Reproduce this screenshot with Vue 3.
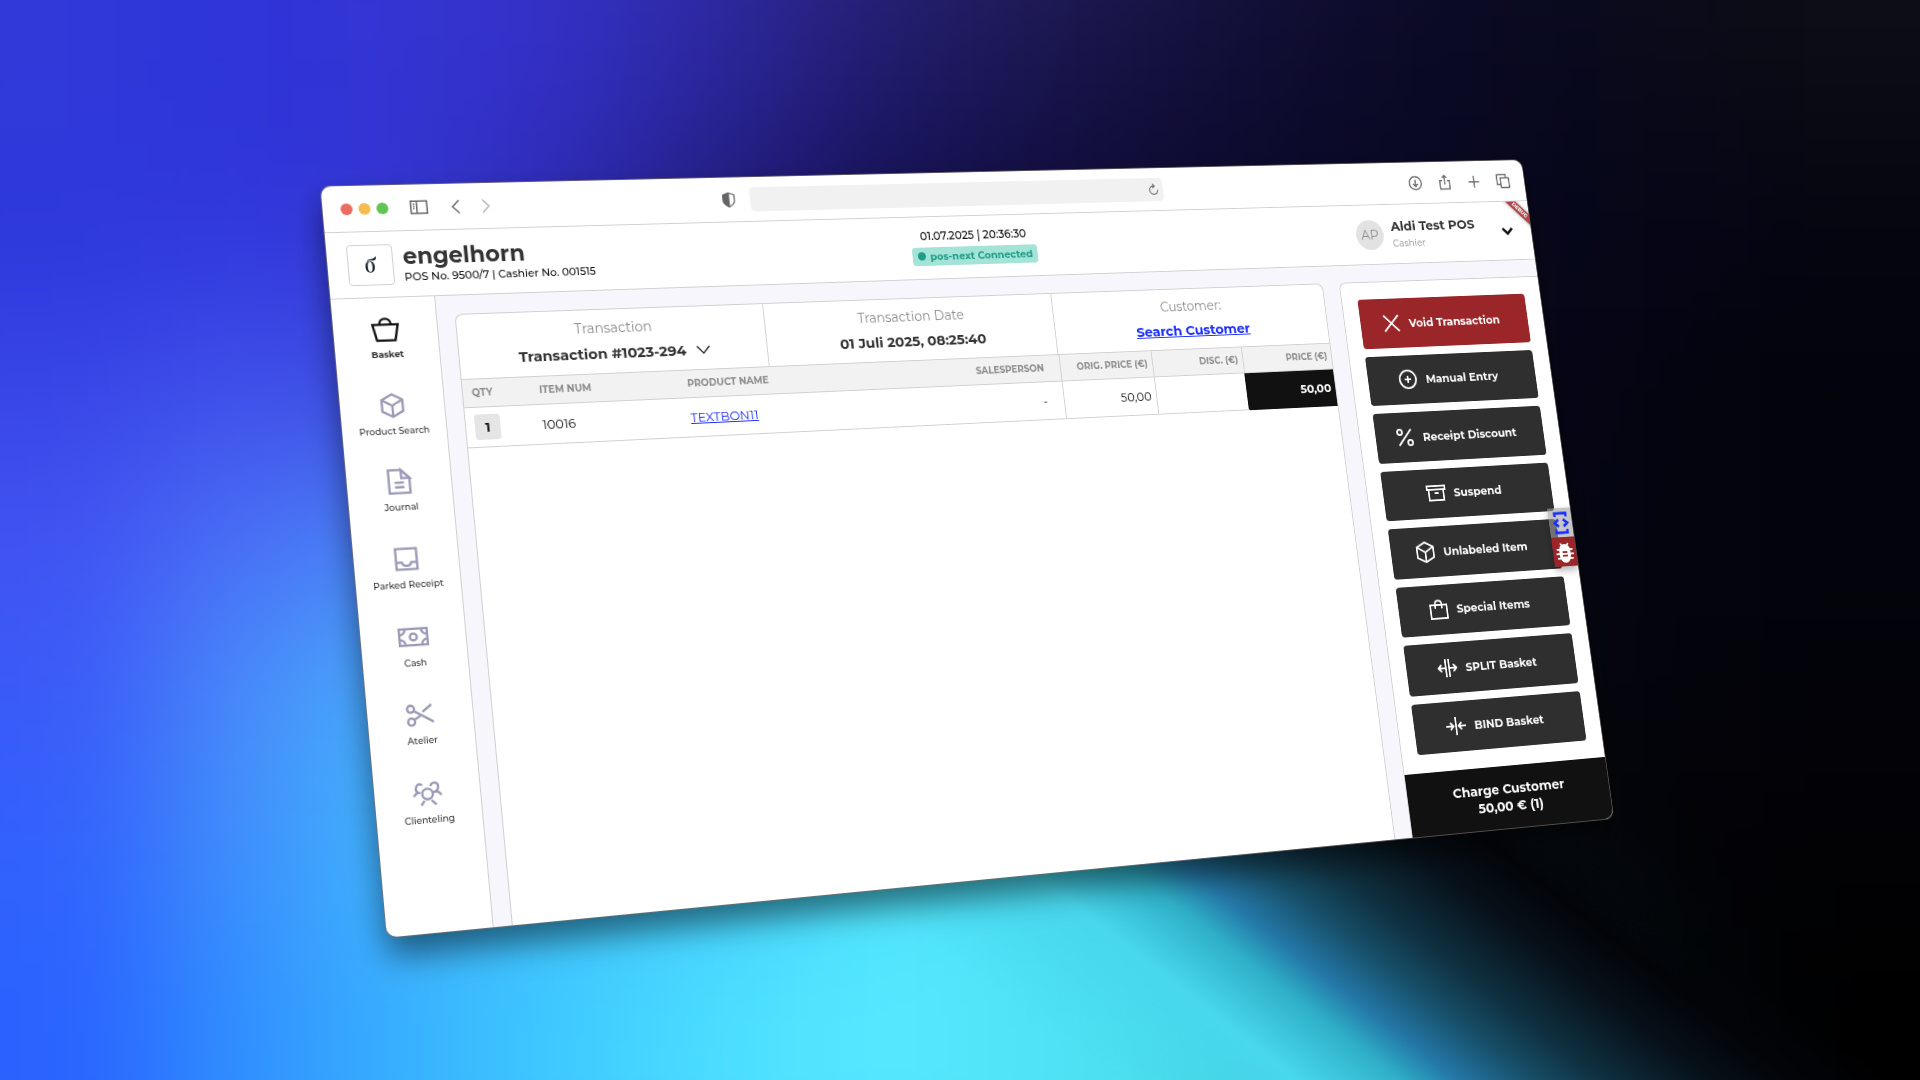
<script setup>
const backdrop = [
  ['#3139d9', '#3139d9', '#2f36da', '#3636d4', '#3532c6', '#302ba2', '#2a2478', '#241f5a', '#191545', '#100e30', '#0c0b22', '#0e0e1a', '#101018', '#101018'],
  ['#3139d9', '#3139d9', '#2d33d8', '#3434d2', '#322fc4', '#2a269c', '#201b6c', '#19154e', '#110e38', '#0b0a28', '#080820', '#090918', '#0b0b14', '#0b0b14'],
  ['#2d38dc', '#2d38dc', '#3138dd', '#3335d2', '#2d2ab0', '#201b78', '#140f50', '#0e0b3a', '#0b092c', '#090824', '#07071c', '#050516', '#050510', '#050510'],
  ['#3845e6', '#3845e6', '#4050ea', '#3c4ae0', '#2a3ac0', '#1a2080', '#101050', '#0a0a3a', '#08082a', '#070720', '#060618', '#04040f', '#03030c', '#03030c'],
  ['#4154f2', '#4154f2', '#4a70f6', '#4a84f6', '#3a7ae0', '#2a60b0', '#1c4080', '#102858', '#0a1838', '#070c24', '#050616', '#04040e', '#03030c', '#03030c'],
  ['#3a5af8', '#3a5af8', '#4a8cfa', '#46b0fa', '#40b8f8', '#3ab0f0', '#3a98d0', '#3080a0', '#206070', '#103040', '#05080f', '#03030a', '#020208', '#020208'],
  ['#3262fc', '#3262fc', '#4090fc', '#3fb6fc', '#40c0fb', '#42ccfb', '#4ae0fc', '#4ae0f6', '#3fc8da', '#123c54', '#04060c', '#020206', '#020205', '#020205'],
  ['#2a62ff', '#2a62ff', '#3090ff', '#38b0ff', '#3ecaff', '#4cdeff', '#58eaff', '#50e2f6', '#46dcea', '#249cb0', '#0a3238', '#010406', '#000000', '#000000'],
  ['#2a62ff', '#2a62ff', '#3090ff', '#38b0ff', '#3ecaff', '#4cdeff', '#54e6ff', '#50e2f6', '#4ae0ec', '#30b4c2', '#0e4a50', '#020608', '#000000', '#000000'],
]

const cube = ['M12 2l9 5v10l-9 5-9-5V7z', 'M3 7l9 5 9-5', 'M12 12v10']

const navItems = [
  { label: 'Basket', active: true, paths: ['M1 8h22l-3 14H4z', 'M7 8c0-7 10-7 10 0'] },
  { label: 'Product Search', paths: cube },
  { label: 'Journal', paths: ['M3 2h11l7 7v13H3z', 'M14 2v7h7z', 'M8 13h8M8 17h8'] },
  { label: 'Parked Receipt', paths: ['M3 3h18v18H3z', 'M3 15h5c1 4 7 4 8 0h5'] },
  { label: 'Cash', paths: ['M0 5h24v14H0z', 'M12 9a3 3 0 1 0 0 6a3 3 0 1 0 0-6', 'M5 5a5 5 0 0 1-5 5M19 5a5 5 0 0 0 5 5M5 19a5 5 0 0 0-5-5M19 19a5 5 0 0 1 5-5'] },
  { label: 'Atelier', paths: ['M4 4a3 3 0 1 0 0 6a3 3 0 1 0 0-6', 'M4 15a3 3 0 1 0 0 6a3 3 0 1 0 0-6', 'M7 9l16 10', 'M7 16l5-3M14 10l8-6'] },
  { label: 'Clienteling', paths: ['M12 8a4 4 0 1 0 0 9a4 4 0 1 0 0-9', 'M9 18l-3 4M15 18l4 4', 'M0 14l3-3M8 5c-3-4-8 2-4 6h2', 'M15 6c1-5 9-3 6 3l-2 2M17 11h4l3 3'] },
]

const actions = [
  { label: 'Void Transaction', danger: true, paths: ['M3 3l18 18M21 3L3 21'] },
  { label: 'Manual Entry', paths: ['M12 2a10 10 0 1 0 0 20a10 10 0 1 0 0-20', 'M12 8v8M8 12h8'] },
  { label: 'Receipt Discount', paths: ['M20 3L4 21', 'M6 3a3 3 0 1 0 0 6a3 3 0 1 0 0-6', 'M18 15a3 3 0 1 0 0 6a3 3 0 1 0 0-6'] },
  { label: 'Suspend', paths: ['M1 4h22v4H1z', 'M3 8v12h18V8', 'M10 12h5'] },
  { label: 'Unlabeled Item', paths: ['M12 1l10 5v12l-10 5-10-5V6z', 'M2 6l10 6 10-6', 'M12 12v11'] },
  { label: 'Special Items', paths: ['M2 7h20v15H2z', 'M8 11V6c0-5 8-5 8 0v5'] },
  { label: 'SPLIT Basket', paths: ['M10 2v20M14 2v20', 'M10 12H2M5 8l-4 4 4 4', 'M14 12h8M19 8l4 4-4 4'] },
  { label: 'BIND Basket', paths: ['M12 2v20', 'M0 12h8M5 8l4 4-4 4', 'M24 12h-8M19 8l-4 4 4 4'] },
]

const toolbarIcons = [
  { name: 'Downloads', paths: ['M12 2a10 10 0 1 0 0 20a10 10 0 1 0 0-20', 'M12 7v10M8 13l4 4 4-4'] },
  { name: 'Share', paths: ['M8 9H4v13h16V9h-4', 'M12 15V1M8 5l4-4 4 4'] },
  { name: 'New tab', paths: ['M12 3v18M3 12h18'] },
  { name: 'Tab overview', paths: ['M8 7h14v15H8z', 'M8 17H2V2h15v5'] },
]
</script>

<template>
  <main class="stage">
    <div class="backdrop" aria-hidden="true">
      <template v-for="(row, r) in backdrop" :key="r">
        <span v-for="(tone, c) in row" :key="c" :style="{ background: tone }"></span>
      </template>
    </div>
    <div class="glow" aria-hidden="true"></div>

    <section class="window">
      <div class="chrome">
        <div class="chrome-left">
          <span class="dot red"></span>
          <span class="dot amber"></span>
          <span class="dot green"></span>
          <button class="tool side" aria-label="Sidebar">
            <svg viewBox="0 0 24 24"><path d="M1 3h22v17H1zM9 3v17M4 7h2M4 10h2M4 13h2" /></svg>
          </button>
          <button class="tool back" aria-label="Back">
            <svg viewBox="0 0 24 24"><path d="M16 3l-9 9 9 9" /></svg>
          </button>
          <button class="tool forward" aria-label="Forward">
            <svg viewBox="0 0 24 24"><path d="M8 3l9 9-9 9" /></svg>
          </button>
        </div>
        <div class="address">
          <svg class="shield" viewBox="0 0 24 24">
            <path d="M12 1l9 3v9c0 5-5 8-9 10c-4-2-9-5-9-10V4z" />
            <path class="half" d="M12 1v22c-4-2-9-5-9-10V4z" />
          </svg>
          <div class="field">
            <input type="text" aria-label="Address" />
            <button class="tool" aria-label="Reload">
              <svg viewBox="0 0 24 24"><path d="M20 13a8 8 0 1 1-8-8h2M10 1l4 4-4 4" /></svg>
            </button>
          </div>
        </div>
        <div class="chrome-right">
          <button v-for="icon in toolbarIcons" :key="icon.name" class="tool" :aria-label="icon.name">
            <svg viewBox="0 0 24 24"><path v-for="d in icon.paths" :key="d" :d="d" /></svg>
          </button>
        </div>
      </div>

      <header class="header">
        <div class="brand">
          <div class="logo">
            <svg viewBox="0 0 24 32">
              <path fill-rule="evenodd" d="M11 10c6 0 8 5 8 10c0 6-3 10-8 10c-5 0-8-4-8-10c0-5 2-10 8-10zM11 11c-3 0-4 5-4 9c0 4 1 9 4 9c3 0 4-5 4-9c0-4-1-9-4-9z" />
              <path d="M6 11c1-4 4-4 8-5c4 0 6-2 8-5c1 5-1 8-5 8c-4 0-8-1-11 2z" />
            </svg>
          </div>
          <div>
            <h1>engelhorn</h1>
            <p>POS No. 9500/7 | Cashier No. 001515</p>
          </div>
        </div>
        <div class="status">
          <time>01.07.2025 | 20:36:30</time>
          <span class="badge"><i></i>pos-next Connected</span>
        </div>
        <div class="user">
          <span class="avatar">AP</span>
          <div class="who">
            <strong>Aldi Test POS</strong>
            <small>Cashier</small>
          </div>
          <button class="more" aria-label="Account menu">
            <svg viewBox="0 0 16 16"><path d="M2 5l6 6 6-6" /></svg>
          </button>
        </div>
        <div class="corner"><span>DEBUG</span></div>
      </header>

      <div class="body">
        <nav class="nav">
          <a v-for="item in navItems" :key="item.label" href="#" :class="{ active: item.active }">
            <svg viewBox="-1 -1 26 26"><path v-for="d in item.paths" :key="d" :d="d" /></svg>
            {{ item.label }}
          </a>
        </nav>

        <div class="content">
          <div class="card">
            <div class="summary">
              <div>
                <span>Transaction</span>
                <button class="pick">
                  Transaction #1023-294
                  <svg viewBox="0 0 24 24"><path d="M2 6l10 11L22 6" /></svg>
                </button>
              </div>
              <div>
                <span>Transaction Date</span>
                <strong>01 Juli 2025, 08:25:40</strong>
              </div>
              <div>
                <span>Customer:</span>
                <a href="#">Search Customer</a>
              </div>
            </div>
            <table>
              <thead>
                <tr>
                  <th class="qty">QTY</th>
                  <th class="num">ITEM NUM</th>
                  <th>PRODUCT NAME</th>
                  <th class="seller">SALESPERSON</th>
                  <th class="money">ORIG. PRICE (€)</th>
                  <th class="money">DISC. (€)</th>
                  <th class="money">PRICE (€)</th>
                </tr>
              </thead>
              <tbody>
                <tr>
                  <td class="qty"><button>1</button></td>
                  <td>10016</td>
                  <td><a href="#">TEXTBON11</a></td>
                  <td class="seller">-</td>
                  <td class="money">50,00</td>
                  <td class="money"></td>
                  <td class="money total">50,00</td>
                </tr>
              </tbody>
            </table>
          </div>

          <aside class="panel">
            <div class="actions">
              <button v-for="action in actions" :key="action.label" :class="{ danger: action.danger }">
                <svg viewBox="0 0 24 24"><path v-for="d in action.paths" :key="d" :d="d" /></svg>
                {{ action.label }}
              </button>
            </div>
            <button class="charge">Charge Customer<br />50,00 € (1)</button>
          </aside>
        </div>
      </div>

      <div class="debug-tools">
        <button class="inspect" aria-label="Inspect">
          <svg viewBox="0 0 24 28">
            <path d="M5 7V3h14v4M5 21v4h14v-4" />
            <path d="M9 10l-5 4 5 4M15 10l5 4-5 4" />
          </svg>
        </button>
        <button class="bug" aria-label="Report bug">
          <svg viewBox="0 0 24 24">
            <path class="legs" d="M7 2l3 4M17 2l-3 4M2 9h20M1 14h22M2 19h20" />
            <path class="shell" d="M12 4c4 0 6 3 6 6v6c0 4-3 7-6 7s-6-3-6-7v-6c0-3 2-6 6-6z" />
            <path class="marks" d="M9 12h6M9 16h6" />
          </svg>
        </button>
      </div>
    </section>
  </main>
</template>

<style>
body {
  margin: 0;
  background: #05050f;
}
</style>

<style scoped>
* {
  box-sizing: border-box;
}

button,
input {
  margin: 0;
  padding: 0;
  border: 0;
  background: none;
  font: inherit;
  color: inherit;
}

svg {
  display: block;
  flex: none;
  fill: none;
  stroke: currentColor;
}

.stage {
  position: relative;
  display: grid;
  place-items: center;
  min-height: 100vh;
  overflow: hidden;
  font-family: Montserrat, Inter, "Liberation Sans", sans-serif;
  color: #111;
}

.backdrop {
  position: absolute;
  inset: -160px;
  display: grid;
  grid-template-columns: repeat(14, 1fr);
  grid-auto-rows: 1fr;
  filter: blur(68px);
}

.glow {
  position: absolute;
  top: 68%;
  right: 0;
  bottom: 0;
  left: 47%;
  background: linear-gradient(
    38deg,
    rgba(72, 216, 238, 0) 14%,
    #48d8ee 27%,
    #2fb0c8 34%,
    #2478a8 38%,
    #17506a 43%,
    #0f3040 48%,
    #07111a 55%,
    #020408 61%,
    rgba(2, 4, 8, 0) 68%
  );
}

.window {
  position: relative;
  display: flex;
  flex-direction: column;
  width: calc(100vw - 560px);
  min-height: calc(100vh - 330px);
  border-radius: 10px;
  background: #fff;
  box-shadow: 0 0 0 1px rgba(120, 110, 105, 0.7), 0 18px 32px rgba(0, 0, 0, 0.5);
  transform: matrix3d(0.8922, -0.05455, 0, 0.000094792, 0.107, 0.93592, 0, -0.00003973, 0, 0, 1, 0, 39, -22, 0, 1);
}

.chrome {
  display: grid;
  grid-template-columns: 1fr 532px 1fr;
  align-items: center;
  height: 48px;
  border-bottom: 1px solid #d0d0d0;
  color: #666;
}

.chrome-left,
.chrome-right {
  display: flex;
  align-items: center;
}

.chrome-left {
  padding-left: 18px;
  gap: 6px;
}

.chrome-right {
  justify-content: flex-end;
  gap: 19px;
  padding-right: 18px;
}

.dot {
  width: 12px;
  height: 12px;
  border-radius: 50%;
}

.red {
  background: #ed6a5e;
}

.amber {
  background: #f5bd4f;
}

.green {
  background: #61c454;
}

.tool svg {
  width: 18px;
  height: 18px;
  stroke-width: 2;
}

.side {
  margin-left: 16px;
}

.back {
  margin-left: 14px;
}

.forward {
  margin-left: 6px;
  color: #b5b5b5;
}

.address {
  display: flex;
  align-items: center;
  gap: 15px;
}

.shield {
  width: 16px;
  height: 16px;
  stroke-width: 2;
}

.half {
  fill: currentColor;
}

.field {
  display: flex;
  align-items: center;
  width: 469px;
  height: 26px;
  padding-right: 4px;
  border-radius: 5px;
  background: #f1f1f1;
}

.field input {
  flex: 1;
  min-width: 0;
}

.field svg {
  width: 14px;
  height: 14px;
}

.header {
  position: relative;
  display: flex;
  align-items: center;
  height: 68px;
  padding: 0 22px 0 20px;
  border-bottom: 1px solid #d0d0d0;
}

.brand {
  display: flex;
  flex: 1 1 18px;
  align-items: center;
  gap: 10px;
}

.logo {
  display: grid;
  place-items: center;
  width: 46px;
  height: 42px;
  border: 1px solid #d0d0d0;
  border-radius: 4px;
}

.logo svg {
  width: 14px;
  height: 19px;
  fill: #14202e;
  stroke: none;
}

h1 {
  margin: 0;
  font-size: 23px;
  line-height: 26px;
  font-weight: 700;
  color: #333;
}

.brand p {
  margin: 0;
  font-size: 11px;
  line-height: 16px;
  font-weight: 500;
}

.status {
  display: flex;
  flex-direction: column;
  align-items: center;
  gap: 2px;
  padding-bottom: 4px;
  font-size: 12px;
  line-height: 20px;
  font-weight: 500;
}

.badge {
  display: flex;
  align-items: center;
  gap: 5px;
  height: 20px;
  padding: 0 6px;
  border-radius: 4px;
  background: #a3e3d8;
  font-size: 11px;
  font-weight: 700;
  color: #1d9c86;
}

.badge i {
  width: 9px;
  height: 9px;
  border-radius: 50%;
  background: currentColor;
}

.user {
  display: flex;
  flex: 1 1 0;
  align-items: center;
  justify-content: flex-end;
}

.avatar {
  display: grid;
  place-items: center;
  width: 34px;
  height: 34px;
  border-radius: 50%;
  background: #e2e2e2;
  font-size: 15px;
  color: #8c8c8c;
}

.who {
  display: flex;
  flex-direction: column;
  width: 148px;
  padding-left: 10px;
}

.who strong {
  font-size: 15px;
  line-height: 20px;
  font-weight: 700;
  color: #333;
}

.who small {
  font-size: 11px;
  line-height: 18px;
  color: #8c8c8c;
}

.more svg {
  width: 16px;
  height: 16px;
  stroke-width: 3;
}

.corner {
  position: absolute;
  top: 0;
  right: 0;
  width: 40px;
  height: 40px;
  overflow: hidden;
}

.corner span {
  position: absolute;
  top: 6px;
  right: -22px;
  width: 66px;
  height: 9px;
  background: #b04549;
  box-shadow: 0 0 4px rgba(0, 0, 0, 0.4);
  transform: rotate(45deg);
  font-size: 6px;
  line-height: 9px;
  font-weight: 800;
  text-align: center;
  color: #fff;
}

.body {
  display: flex;
  flex: 1;
}

.nav {
  display: flex;
  flex-direction: column;
  justify-content: space-between;
  width: 105px;
  padding: 17px 0 102px;
  border-right: 1px solid #d0d0d0;
}

.nav a {
  display: flex;
  flex-direction: column;
  align-items: center;
  gap: 3px;
  font-size: 9px;
  line-height: 16px;
  font-weight: 500;
  color: #333;
  text-decoration: none;
}

.nav svg {
  width: 30px;
  height: 30px;
  color: #9b99b5;
  stroke-width: 2;
}

.nav .active {
  font-weight: 700;
}

.nav .active svg {
  color: #111;
}

.content {
  display: flex;
  flex: 1;
  gap: 20px;
  padding: 19px 0 0 18px;
  border-radius: 0 0 10px 0;
  background: #f7f6fc;
}

.card {
  flex: 1;
  overflow: hidden;
  border: 1px solid #d0d0d0;
  border-bottom: 0;
  border-radius: 8px 8px 0 0;
  background: #fff;
}

.summary {
  display: grid;
  grid-template-columns: repeat(3, 1fr);
  height: 67px;
  border-bottom: 1px solid #d0d0d0;
}

.summary > div {
  display: flex;
  flex-direction: column;
  align-items: center;
  justify-content: center;
  gap: 5px;
  padding-bottom: 2px;
  font-size: 15px;
  line-height: 22px;
  font-weight: 700;
  color: #333;
}

.summary > div + div {
  border-left: 1px solid #d0d0d0;
}

.summary strong {
  font-weight: 700;
}

.summary span {
  font-size: 14px;
  font-weight: 400;
  color: #8c8c8c;
}

.pick {
  display: flex;
  align-items: center;
  gap: 10px;
}

.pick svg {
  width: 16px;
  height: 16px;
  color: #111;
  stroke-width: 2;
}

a {
  color: #1a2cff;
}

table {
  width: 100%;
  table-layout: fixed;
  border-collapse: collapse;
}

th {
  height: 28px;
  padding: 0;
  border-bottom: 1px solid #d0d0d0;
  background: #f2f2f2;
  font-size: 10px;
  font-weight: 700;
  text-align: left;
  color: #8c8c8c;
}

td {
  height: 41px;
  padding: 0;
  border-bottom: 1px solid #d0d0d0;
  font-size: 13px;
}

th.qty {
  width: 78px;
}

.qty {
  padding-left: 9px;
}

.qty button {
  width: 26px;
  height: 26px;
  border-radius: 3px;
  background: #e5e5e5;
  font-weight: 700;
}

th.num {
  width: 155px;
}

.seller {
  padding-right: 18px;
  text-align: right;
}

th.money {
  width: 107px;
}

.money {
  padding-right: 5px;
  border-left: 1px solid #d0d0d0;
  text-align: right;
}

.total {
  border-color: #111;
  background: #111;
  font-weight: 700;
  color: #fff;
}

.panel {
  display: flex;
  flex-direction: column;
  width: 249px;
  overflow: hidden;
  border: 1px solid #d0d0d0;
  border-width: 1px 0 0 1px;
  border-radius: 8px 0 10px 0;
  background: #fff;
}

.actions {
  display: flex;
  flex: 1;
  flex-direction: column;
  gap: 9px;
  padding: 19px 20px 20px 19px;
}

.actions button {
  display: flex;
  flex: 1;
  align-items: center;
  justify-content: center;
  gap: 10px;
  padding-right: 10px;
  border-radius: 4px;
  background: #2f2f2f;
  font-size: 13px;
  font-weight: 700;
  color: #fff;
}

.actions .danger {
  background: #9a2629;
}

.actions svg {
  width: 24px;
  height: 24px;
  stroke-width: 2;
}

.charge {
  height: 68px;
  background: #111;
  font-size: 15px;
  line-height: 19px;
  font-weight: 700;
  color: #fff;
}

.debug-tools {
  position: absolute;
  top: 401px;
  right: 0;
  display: flex;
  flex-direction: column;
  width: 29px;
  box-shadow: 0 4px 8px rgba(0, 0, 0, 0.3);
}

.debug-tools button {
  display: grid;
  place-items: center;
  height: 33px;
}

.inspect {
  background: rgba(160, 160, 160, 0.6);
  color: #1a2cff;
}

.inspect svg {
  width: 24px;
  height: 28px;
  stroke-width: 3;
}

.debug-tools .bug {
  background: #9a2629;
  color: #fff;
}

.bug svg {
  width: 24px;
  height: 24px;
  stroke-width: 2;
}

.shell {
  fill: currentColor;
}

.marks {
  stroke: #9a2629;
}
</style>
